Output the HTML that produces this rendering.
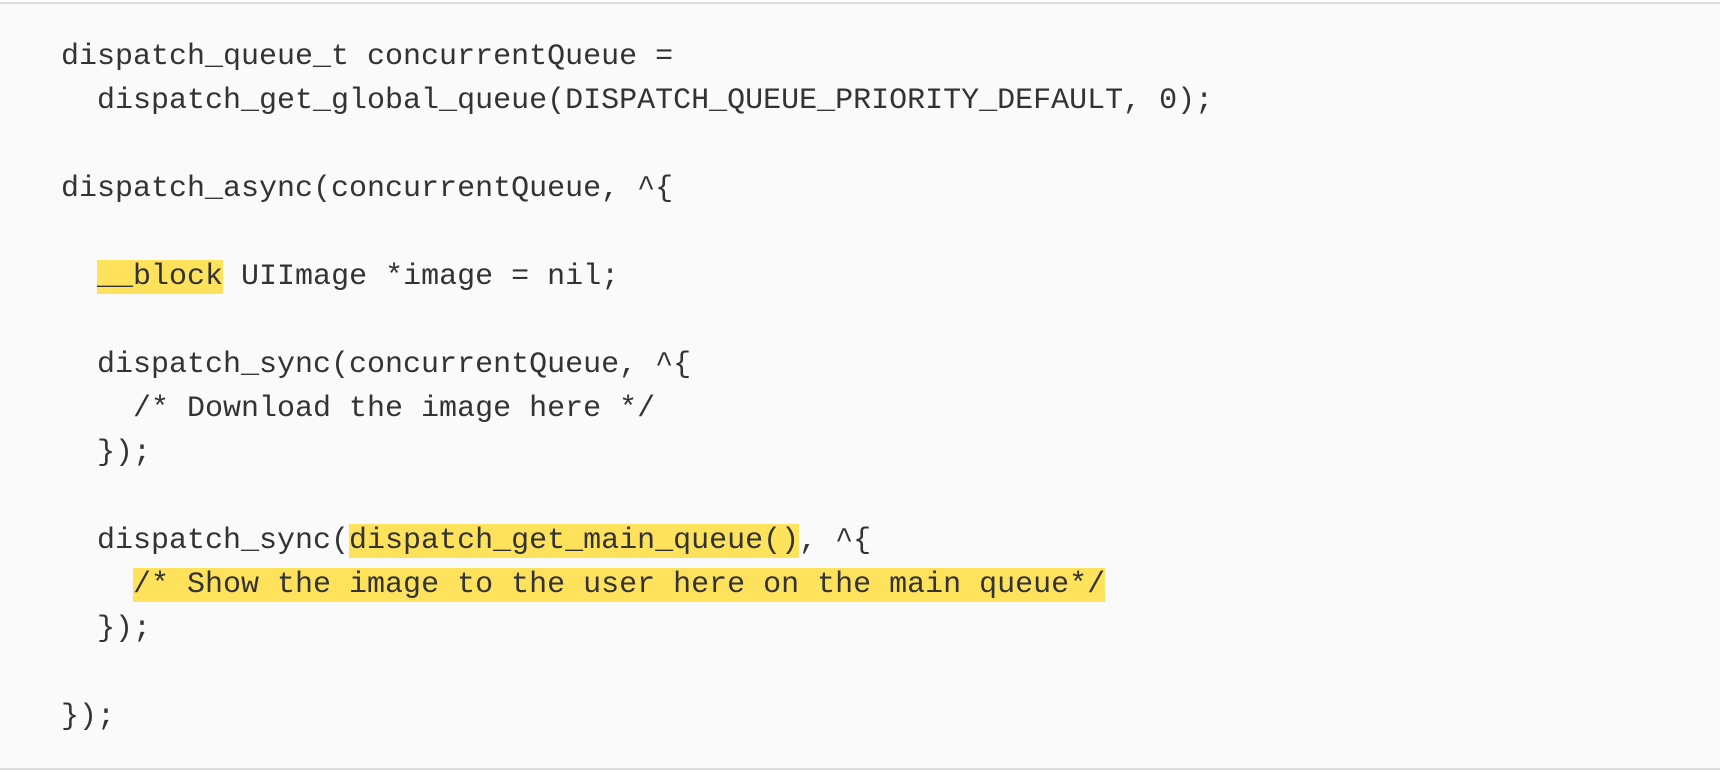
<!DOCTYPE html>
<html><head><meta charset="utf-8"><style>
html,body{margin:0;padding:0;width:1720px;height:772px;background:#fff;overflow:hidden}
.box{position:absolute;left:0;top:2px;width:1720px;height:764px;background:#fafafa;border-top:2px solid #dcdcdc;border-bottom:2px solid #dcdcdc}
pre{margin:0;padding:31px 0 0 61px;font-family:"Liberation Mono",monospace;font-size:30px;line-height:44px;color:#333}
.h{background:#ffe25c}
</style></head><body><div class="box"><pre>dispatch_queue_t concurrentQueue =
  dispatch_get_global_queue(DISPATCH_QUEUE_PRIORITY_DEFAULT, 0);

dispatch_async(concurrentQueue, ^{

  <span class="h">__block</span> UIImage *image = nil;

  dispatch_sync(concurrentQueue, ^{
    /* Download the image here */
  });

  dispatch_sync(<span class="h">dispatch_get_main_queue()</span>, ^{
    <span class="h">/* Show the image to the user here on the main queue*/</span>
  });

});</pre></div></body></html>
